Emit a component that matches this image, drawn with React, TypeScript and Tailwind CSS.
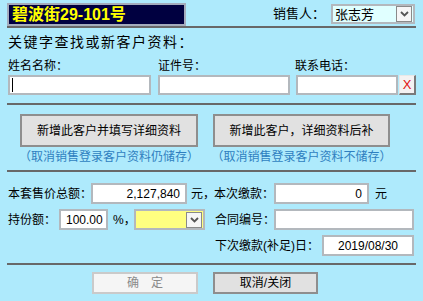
import React from 'react';

const Chevron: React.FC = () => (
  <svg width="9" height="6" viewBox="0 0 9 6">
    <polyline points="1,1 4.5,4.5 8,1" fill="none" stroke="#555" strokeWidth="1.8" />
  </svg>
);

const DropBtn: React.FC = () => (
  <div className="w-[16px] h-[16px] mr-[1px] shrink-0 border border-[#8a8a8a] bg-[#f6f6f6] flex items-center justify-center">
    <Chevron />
  </div>
);

const Line: React.FC = () => <div className="ml-[7px] w-[409px] h-[2px] bg-[#686868]" />;

const Input: React.FC<{ w: string; children?: React.ReactNode; align?: string }> = ({ w, children, align }) => (
  <div className={`${w} shrink-0 h-[21px] border-2 border-[#b3b8bd] bg-white flex items-center px-[5px] text-[12px] ${align ?? ''}`}>
    {children}
  </div>
);

const Label: React.FC<{ w: string; children: React.ReactNode }> = ({ w, children }) => (
  <span className={`${w} shrink-0 whitespace-nowrap`}>{children}</span>
);

export default function App() {
  return (
    <div className="w-[423px] h-[301px] bg-[#aeeafc] overflow-hidden text-black font-['Liberation_Sans','Noto_Sans_CJK_SC',sans-serif]">
      {/* header */}
      <div className="flex items-start justify-between pt-[3px] pl-[7px] pr-[8px] h-[26px]">
        <div className="w-[179px] h-[23px] border-2 border-[#a4acbc] bg-[#000040] text-[#ffff00] text-[16px] font-bold leading-[19px] pl-[3px] flex items-center">
          碧波街29-101号
        </div>
        <div className="flex items-center mt-[1px]">
          <span className="text-[13px] mr-[6px]">销售人：</span>
          <div className="w-[84px] h-[20px] border-2 border-[#b3b8bd] bg-[#e0ffff] flex items-center justify-between pl-[2px]">
            <span className="text-[13px] leading-none">张志芳</span>
            <DropBtn />
          </div>
        </div>
      </div>
      <Line />

      {/* search */}
      <div className="mt-[6px] pl-[8px] h-[16px] text-[14px] leading-[16px] tracking-[1.5px]">关键字查找或新客户资料：</div>
      <div className="mt-[9px] h-[14px] flex text-[12px] leading-[14px] pl-[8px]">
        <span className="w-[150px]">姓名名称：</span>
        <span className="w-[137px]">证件号：</span>
        <span>联系电话：</span>
      </div>
      <div className="mt-[2px] flex pl-[8px] items-center">
        <div className="w-[143px] h-[20px] border-2 border-[#b3b8bd] bg-white flex items-center pl-[2px]">
          <div className="w-[1px] h-[14px] bg-black" />
        </div>
        <div className="ml-[7px] w-[132px] h-[20px] border-2 border-[#b3b8bd] bg-white" />
        <div className="ml-[6px] w-[102px] h-[20px] border-2 border-[#b3b8bd] bg-white" />
        <div className="ml-[1px] w-[17px] h-[20px] bg-[#f4f2f2] border-t border-l border-[#e8e8e8] border-r-2 border-b-2 border-r-[#7a7a7a] border-b-[#7a7a7a] flex items-center justify-center text-[#e01010] text-[13px] leading-none">
          X
        </div>
      </div>
      <div className="mt-[8px]"><Line /></div>

      {/* add buttons */}
      <div className="mt-[9px] flex pl-[20px] gap-[15px]">
        <div className="w-[178px] flex flex-col items-center">
          <div className="w-[178px] h-[33px] bg-[#e1e1e1] border-2 border-[#8e8e8e] flex items-center justify-center text-[12px]">
            新增此客户并填写详细资料
          </div>
          <div className="mt-[3px] text-[12px] leading-[14px] text-[#2f7fc0] whitespace-nowrap">（取消销售登录客户资料仍储存）</div>
        </div>
        <div className="w-[177px] flex flex-col items-center">
          <div className="w-[177px] h-[33px] bg-[#e1e1e1] border-2 border-[#8e8e8e] flex items-center justify-center text-[12px]">
            新增此客户，详细资料后补
          </div>
          <div className="mt-[3px] text-[12px] leading-[14px] text-[#2f7fc0] whitespace-nowrap">（取消销售登录客户资料不储存）</div>
        </div>
      </div>
      <div className="mt-[6px]"><Line /></div>

      {/* amounts */}
      <div className="mt-[11px] flex flex-col gap-[5px] text-[12px]">
        <div className="flex items-center pl-[8px] h-[21px]">
          <div className="w-[206px] shrink-0 flex items-center">
            <Label w="w-[83px]">本套售价总额：</Label>
            <Input w="w-[96px]" align="justify-end">2,127,840</Input>
            <span className="ml-[4px] whitespace-nowrap">元，</span>
          </div>
          <Label w="w-[60px]">本次缴款：</Label>
          <Input w="w-[95px]" align="justify-end">0</Input>
          <span className="ml-[6px]">元</span>
        </div>
        <div className="flex items-center pl-[8px] h-[21px]">
          <div className="w-[206px] shrink-0 flex items-center">
            <Label w="w-[51px]">持份额：</Label>
            <Input w="w-[49px]">100.00</Input>
            <Label w="ml-[5px] w-[21px]">%，</Label>
            <div className="w-[71px] shrink-0 h-[21px] border-2 border-[#b3b8bd] bg-[#ffff80] flex items-center justify-end">
              <DropBtn />
            </div>
          </div>
          <Label w="w-[60px] pl-[1px]">合同编号：</Label>
          <Input w="w-[140px]" />
        </div>
        <div className="flex items-center pl-[8px] h-[21px]">
          <div className="w-[206px] shrink-0" />
          <Label w="w-[108px] pl-[1px]">下次缴款(补足)日：</Label>
          <Input w="w-[92px]" align="justify-center">2019/08/30</Input>
        </div>
      </div>
      <div className="mt-[7px]"><Line /></div>

      {/* bottom buttons */}
      <div className="mt-[7px] flex pl-[92px] gap-[15px]">
        <div className="w-[106px] h-[22px] bg-[#f5f5f5] border-2 border-[#cacaca] flex items-center justify-center text-[12px] text-[#8a8a8a]">
          确　定
        </div>
        <div className="w-[105px] h-[22px] bg-[#e1e1e1] border-2 border-[#8e8e8e] flex items-center justify-center text-[12px]">
          取消/关闭
        </div>
      </div>
    </div>
  );
}
